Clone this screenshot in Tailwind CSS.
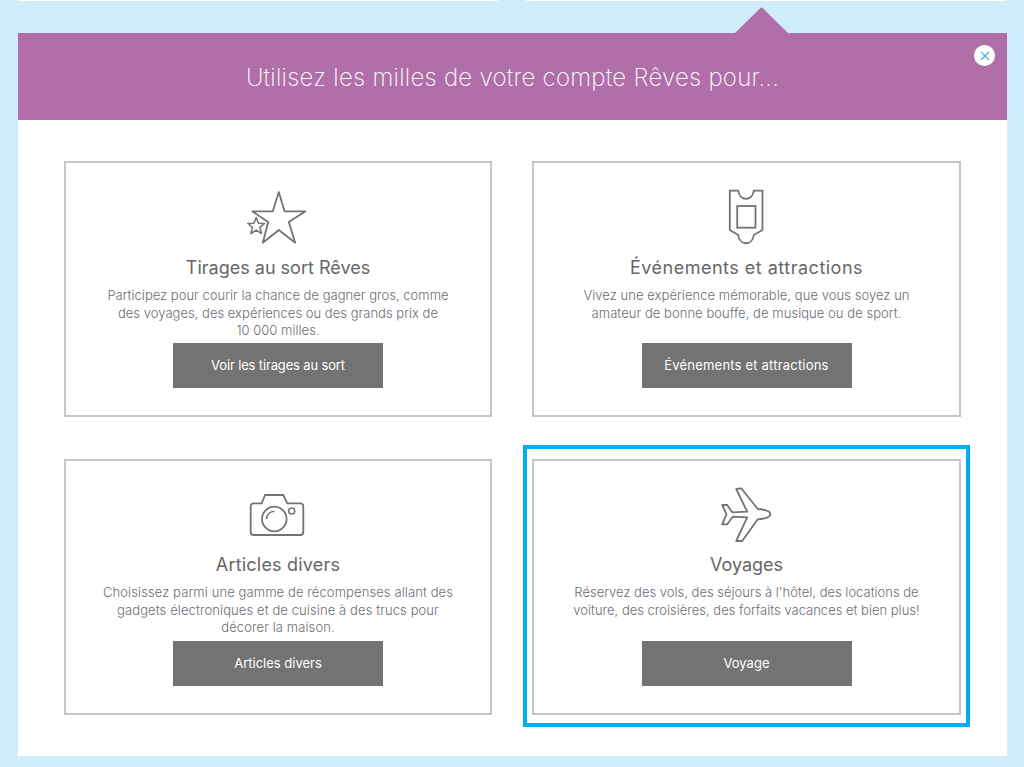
<!DOCTYPE html>
<html lang="fr">
<head>
  <meta charset="UTF-8" />
  <meta name="viewport" content="width=device-width, initial-scale=1.0" />
  <title>Utilisez vos milles Rêves</title>
  <script src="https://cdn.jsdelivr.net/npm/@tailwindcss/browser@4"></script>
</head>
<body class="h-[767px] overflow-hidden bg-[#cfedfa] font-['Inter',sans-serif]">

  <div class="flex gap-[28px] pl-[18px] h-[1px]">
    <div class="w-[480px] bg-white"></div>
    <div class="w-[480px] bg-white"></div>
  </div>

  <div class="relative ml-[18px] mt-[32px] w-[989px] h-[723px] bg-white">
    <!-- tab pointer -->
    <div class="absolute left-[717px] top-[-26px] w-[53px] h-[26px] bg-[#b06fa8] [clip-path:polygon(50%_0,100%_100%,0_100%)]"></div>

    <div class="relative flex items-center justify-center h-[87px] pt-[2px] bg-[#b06fa8]">
      <h1 class="text-[24px] font-extralight tracking-[0.25px] text-white">Utilisez les milles de votre compte Rêves pour...</h1>
      <button class="absolute right-[12px] top-[12px] flex items-center justify-center w-[21px] h-[21px] rounded-full bg-white">
        <svg width="10" height="10" viewBox="0 0 10 10" fill="none" stroke="#5aa9dc" stroke-width="1.2"><path d="M1 1l8 8M9 1l-8 8" /></svg>
      </button>
    </div>

    <div class="grid grid-cols-[428px_429px] gap-x-[40px] gap-y-[42px] pl-[46px] pt-[41px]">

      <div class="flex flex-col items-center h-[256px] border-2 border-[#c4c6c8] pt-[17px]">
        <svg class="w-[100px] h-[75px]" viewBox="228.5 180 100 75" fill="none" stroke="#737373" stroke-width="1.8" stroke-linejoin="round">
          <path d="M279.3 192L285 211.3H306L289.3 222L295.7 242.7L279.3 230L263.3 242.7L268.7 222L252.7 211.3H273.3Z" fill="#fff" />
          <path d="M256.7 217.5L259 223.2L265 223.5L260.4 227.4L262 233.5L256.7 230.2L251.4 233.5L253 227.4L248.4 223.5L254.4 223.2Z" fill="#fff" stroke-width="1.5" />
        </svg>
        <h2 class="h-[24px] pt-[1px] text-[18px] leading-[24px] text-[#666]">Tirages au sort Rêves</h2>
        <p class="w-[360px] h-[57px] mt-[8px] text-center text-[13px] leading-[17.5px] font-light tracking-[0.02px] text-[#6d6e71]">Participez pour courir la chance de gagner gros, comme des voyages, des expériences ou des grands prix de 10&nbsp;000&nbsp;milles.</p>
        <a class="flex items-center justify-center w-[210px] h-[45px] -mt-[1px] bg-[#737373] text-[13px] tracking-[-0.15px] text-white">Voir les tirages au sort</a>
      </div>

      <div class="flex flex-col items-center h-[256px] border-2 border-[#c4c6c8] pt-[17px]">
        <svg class="w-[100px] h-[75px]" viewBox="696.5 180 100 75" fill="none" stroke="#737373" stroke-width="1.8">
          <path d="M729.3 190.7H737.7C739 201.5 752 201.5 753.3 190.7H762V230L753.3 235C752 246 739 246 737.7 235L729.3 230Z" />
          <rect x="736.7" y="206" width="18.3" height="21.7" />
        </svg>
        <h2 class="h-[24px] pt-[1px] text-[18px] leading-[24px] tracking-[0.5px] text-[#666]">Événements et attractions</h2>
        <p class="w-[360px] h-[57px] mt-[8px] text-center text-[13px] leading-[17.5px] font-light tracking-[0.05px] text-[#6d6e71]">Vivez une expérience mémorable, que vous soyez un amateur de bonne bouffe, de musique ou de sport.</p>
        <a class="flex items-center justify-center w-[210px] h-[45px] -mt-[1px] bg-[#737373] text-[13px] tracking-[0.2px] text-white">Événements et attractions</a>
      </div>

      <div class="flex flex-col items-center h-[256px] border-2 border-[#c4c6c8] pt-[17px]">
        <svg class="w-[100px] h-[75px]" viewBox="228 478 100 75" fill="none" stroke="#737373" stroke-width="1.8" stroke-linejoin="round">
          <path d="M253.7 503.3H261.7L265 495H283.3L287.3 503.3H300.3Q303.3 503.3 303.3 506.3V532Q303.3 535 300.3 535H253.7Q250.7 535 250.7 532V506.3Q250.7 503.3 253.7 503.3Z" />
          <circle cx="274.3" cy="519" r="12.3" />
          <path d="M266.5 519A8 8 0 0 1 274.3 511.2" stroke-width="1.5" />
          <circle cx="291.7" cy="511" r="3" stroke-width="1.5" />
        </svg>
        <h2 class="h-[24px] text-[18px] leading-[24px] tracking-[0.2px] text-[#666]">Articles divers</h2>
        <p class="w-[360px] h-[57px] mt-[7px] text-center text-[13px] leading-[17.5px] font-light tracking-[0.1px] text-[#6d6e71]">Choisissez parmi une gamme de récompenses allant des gadgets électroniques et de cuisine à des trucs pour décorer la maison.</p>
        <a class="flex items-center justify-center w-[210px] h-[45px] bg-[#737373] text-[13px] text-white">Articles divers</a>
      </div>

      <div class="relative flex flex-col items-center h-[256px] border-2 border-[#c4c6c8] pt-[17px]">
        <!-- selected card outline -->
        <div class="absolute left-[-11px] right-[-11px] top-[-16px] bottom-[-14px] border-4 border-[#00aeef]"></div>
        <svg class="w-[100px] h-[75px]" viewBox="696.5 478 100 75" fill="none" stroke="#737373" stroke-width="1.8" stroke-linejoin="round">
          <path d="M770 514Q769.5 516 768.3 516.7Q763 519.3 757.3 519.3L741.7 541H735.7L746.7 517.3L732.3 516.7L726.7 524.3H721.7L726 514.3L721.7 505H726.7L731.7 512.3L746.7 511.7L735.7 489L740.7 488.3L757.3 509Q763 509 768.3 511.5Q769.5 512.5 770 514Z" />
        </svg>
        <h2 class="h-[24px] text-[18px] leading-[24px] text-[#666]">Voyages</h2>
        <p class="w-[360px] h-[57px] mt-[7px] text-center text-[13px] leading-[17.5px] font-light text-[#6d6e71]">Réservez des vols, des séjours à l'hôtel, des locations de voiture, des croisières, des forfaits vacances et bien plus!</p>
        <a class="flex items-center justify-center w-[210px] h-[45px] bg-[#737373] text-[13px] text-white">Voyage</a>
      </div>

    </div>
  </div>

</body>
</html>
